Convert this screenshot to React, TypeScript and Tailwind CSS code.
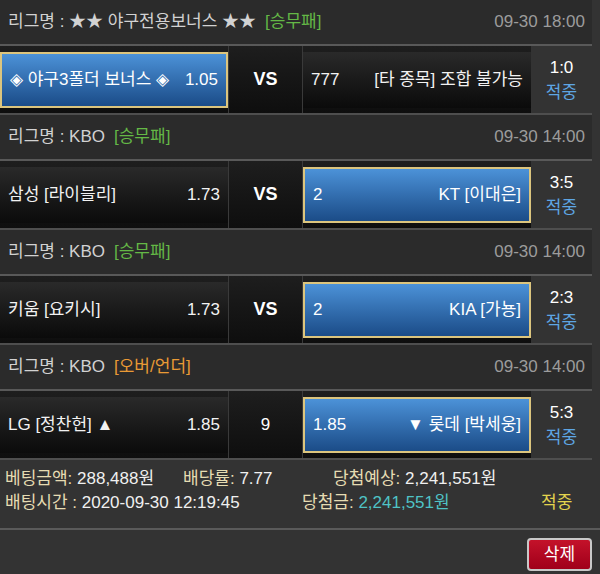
import { FC } from "react";

type Side = { name: string; odds: string; picked?: boolean };

type Match = {
  league: string;
  type: string;
  typeColor: string;
  time: string;
  home: Side;
  mid: string;
  midBold?: boolean;
  away: Side;
  score: string;
};

const matches: Match[] = [
  {
    league: "★★ 야구전용보너스 ★★",
    type: "승무패",
    typeColor: "text-[#64b846]",
    time: "09-30 18:00",
    home: { name: "◈ 야구3폴더 보너스 ◈", odds: "1.05", picked: true },
    mid: "VS",
    midBold: true,
    away: { name: "[타 종목] 조합 불가능", odds: "777" },
    score: "1:0"
  },
  {
    league: "KBO",
    type: "승무패",
    typeColor: "text-[#64b846]",
    time: "09-30 14:00",
    home: { name: "삼성 [라이블리]", odds: "1.73" },
    mid: "VS",
    midBold: true,
    away: { name: "KT [이대은]", odds: "2", picked: true },
    score: "3:5"
  },
  {
    league: "KBO",
    type: "승무패",
    typeColor: "text-[#64b846]",
    time: "09-30 14:00",
    home: { name: "키움 [요키시]", odds: "1.73" },
    mid: "VS",
    midBold: true,
    away: { name: "KIA [가뇽]", odds: "2", picked: true },
    score: "2:3"
  },
  {
    league: "KBO",
    type: "오버/언더",
    typeColor: "text-[#e99a35]",
    time: "09-30 14:00",
    home: { name: "LG [정찬헌] ▲", odds: "1.85" },
    mid: "9",
    away: { name: "▼ 롯데 [박세웅]", odds: "1.85", picked: true },
    score: "5:3"
  }
];

const boxClass = (picked?: boolean) =>
  picked
    ? "h-[56px] flex items-center justify-between px-[8px] text-white border-2 border-[#dcc57e] bg-gradient-to-b from-[#4c92d8] to-[#1b4c88]"
    : "h-[56px] flex items-center justify-between px-[8px] text-[#f2f2f2] bg-gradient-to-b from-[#2a2a2a] to-[#0b0b0b]";

const MatchBlock: FC<{ match: Match }> = ({ match }) => (
  <div>
    <div className="h-[44px] bg-[#2b2b2b] flex items-center justify-between pl-[8px] pr-[7px]">
      <span className="text-[#d2d2d2]">
        리그명 : {match.league}
        <span className={`${match.typeColor} ml-[9px]`}>[{match.type}]</span>
      </span>
      <span className="text-[#9c9c9c]">{match.time}</span>
    </div>
    <div className="h-[2px] bg-[#595959]" />
    <div className="h-[67px] flex">
      <div className="w-[531px] flex bg-gradient-to-b from-[#1e1e1e] to-[#0e0e0e]">
        <div className="w-[228px] pt-[6px]">
          <div className={boxClass(match.home.picked)}>
            <span>{match.home.name}</span>
            <span>{match.home.odds}</span>
          </div>
        </div>
        <div className="w-[1px] bg-[#3a3a3a]" />
        <div
          className={
            match.midBold
              ? "w-[73px] flex items-center justify-center text-white font-bold text-[18px]"
              : "w-[73px] flex items-center justify-center text-white"
          }
        >
          {match.mid}
        </div>
        <div className="w-[1px] bg-[#3a3a3a]" />
        <div className="w-[228px] pt-[6px]">
          <div className={boxClass(match.away.picked)}>
            <span>{match.away.odds}</span>
            <span>{match.away.name}</span>
          </div>
        </div>
      </div>
      <div className="flex-1 flex flex-col items-center justify-center bg-[#333] leading-[25px]">
        <span className="text-white">{match.score}</span>
        <span className="text-[#5ea6e4]">적중</span>
      </div>
    </div>
    <div className="h-[2px] bg-[#4e4e4e]" />
  </div>
);

export default function App() {
  return (
    <div className="w-[600px] h-[574px] bg-[#333333] overflow-hidden text-[17px] font-['Liberation_Sans','Noto_Sans_CJK_KR',sans-serif]">
      <div className="w-[592px]">
        {matches.map((m, i) => (
          <MatchBlock key={i} match={m} />
        ))}
      </div>

      <div className="pt-[7px] leading-[24px]">
        <div className="flex pl-[5px]">
          <span className="w-[178px]">
            <span className="text-[#e6dcb2]">베팅금액:</span>{" "}
            <span className="text-[#f0f0f0]">288,488원</span>
          </span>
          <span className="w-[150px]">
            <span className="text-[#e6dcb2]">배당률:</span>{" "}
            <span className="text-[#f0f0f0]">7.77</span>
          </span>
          <span>
            <span className="text-[#e6dcb2]">당첨예상:</span>{" "}
            <span className="text-[#f0f0f0]">2,241,551원</span>
          </span>
        </div>
        <div className="flex pl-[5px]">
          <span className="w-[297px]">
            <span className="text-[#e6dcb2]">배팅시간 :</span>{" "}
            <span className="text-[#f0f0f0]">2020-09-30 12:19:45</span>
          </span>
          <span className="w-[239px]">
            <span className="text-[#e6dcb2]">당첨금:</span>{" "}
            <span className="text-[#4fc3c6]">2,241,551원</span>
          </span>
          <span className="text-[#e3d44e]">적중</span>
        </div>
      </div>

      <div className="h-[2px] bg-[#5a5a5a] mt-[13px]" />

      <div className="flex justify-end pr-[8px] pt-[8px]">
        <button className="w-[65px] h-[33px] rounded-[4px] border-2 border-[#c8c8c8] bg-gradient-to-b from-[#c4122a] to-[#a0001a] text-white text-[17px]">
          삭제
        </button>
      </div>
    </div>
  );
}
